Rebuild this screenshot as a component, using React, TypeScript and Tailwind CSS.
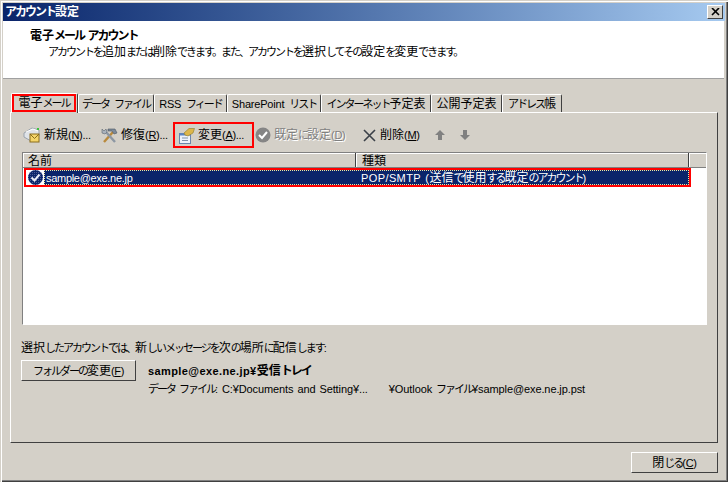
import type { ReactNode } from 'react';

const tabs = [
  { label: 'データ ファイル', w: 'w-[76px]' },
  { label: 'RSS フィード', w: 'w-[73px]' },
  { label: 'SharePoint リスト', w: 'w-[94px]' },
  { label: 'インターネット予定表', w: 'w-[110px]' },
  { label: '公開予定表', w: 'w-[71px]' },
  { label: 'アドレス帳', w: 'w-[60px]' },
];

// raised win2k style edge
const raised = 'border border-t-white border-l-white border-r-[#404040] border-b-[#404040]';

// the reference font is proportional: kana is narrower than kanji, so split text into runs
function T({ children, bold, latin }: { children: string; bold?: boolean; latin?: string }) {
  const runs = children.match(/[\u3000-\u30ff]+|[\u4e00-\u9fff]+|[^\u3000-\u30ff\u4e00-\u9fff]+/g) ?? [];
  return (
    <>
      {runs.map((run, i) => {
        if (/^[\u3000-\u30ff]/.test(run)) {
          return (
            <span key={i} className={bold ? 'text-[12px] tracking-[-2px]' : 'text-[11px] tracking-[-2px]'}>
              {run}
            </span>
          );
        }
        if (/^[\u4e00-\u9fff]/.test(run)) {
          return <span key={i} className="text-[12px]">{run}</span>;
        }
        return (
          <span key={i} className={`text-[11px] ${latin ?? (bold ? 'tracking-[0.4px]' : 'tracking-[-0.3px]')}`}>
            {run}
          </span>
        );
      })}
    </>
  );
}

// label with its underlined access key, e.g. 新規(N)...
function Acc({ text, k, tail = '' }: { text: string; k: string; tail?: string }) {
  return (
    <span>
      <T>{text + '('}</T>
      <u><T>{k}</T></u>
      <T>{')' + tail}</T>
    </span>
  );
}

function MailIcon() {
  return (
    <svg width="18" height="18" viewBox="0 0 18 18" className="shrink-0">
      <path d="M1 7 L9 2 L16 4 L16 10 L8 15 L1 11 Z" fill="#dfe3e8" stroke="#9aa3ad" />
      <path d="M3 6 L10 3 L15 5" fill="none" stroke="#fff" />
      <rect x="7" y="8" width="9" height="8" fill="#f4d56a" stroke="#8a6d1c" />
      <path d="M7 8 L11.5 12.5 L16 8" fill="none" stroke="#8a6d1c" />
      <rect x="14" y="2" width="2" height="2" fill="#3fc23f" />
    </svg>
  );
}

function ToolsIcon() {
  return (
    <svg width="17" height="17" viewBox="0 0 17 17" className="shrink-0">
      <path d="M3 15 L12 5" stroke="#b98a3c" strokeWidth="2.4" />
      <path d="M7 2 L14 2 L16 6 L13 7 L11 4 L7 4 Z" fill="#7d8a99" stroke="#4c5663" strokeWidth="0.6" />
      <path d="M14 15 L5 5" stroke="#8d97a3" strokeWidth="2.4" />
      <path d="M1 2 L3 4 L5 2 L6 5 L4 7 L1 6 Z" fill="#aab3bd" stroke="#5a6470" strokeWidth="0.6" />
    </svg>
  );
}

function ChangeIcon() {
  return (
    <svg width="17" height="17" viewBox="0 0 17 17" className="shrink-0">
      <rect x="1.5" y="6.5" width="11" height="10" fill="#eef3fa" stroke="#6a86ad" />
      <rect x="1.5" y="6.5" width="11" height="2" fill="#5b84c4" />
      <path d="M4 11 H10 M4 13.5 H10" stroke="#7f93ad" />
      <path d="M6 6 L11 1.5 L16.5 1.5 L15 6 L10 9 L7 8 Z" fill="#dcb64a" stroke="#8b7a2c" strokeWidth="0.6" />
    </svg>
  );
}

function CheckCircle() {
  return (
    <svg width="16" height="16" viewBox="0 0 16 16" className="shrink-0">
      <circle cx="8" cy="8" r="7.5" fill="#858585" />
      <path d="M4 8 L7 11 L12 5" fill="none" stroke="#fff" strokeWidth="2" />
    </svg>
  );
}

function CloseX() {
  return (
    <svg width="15" height="15" viewBox="0 0 15 15" className="shrink-0">
      <path d="M2 2 L13 13 M13 2 L2 13" stroke="#3a4048" strokeWidth="1.6" />
    </svg>
  );
}

function Arrow({ down }: { down?: boolean }) {
  return (
    <svg width="12" height="12" viewBox="0 0 12 12" className="shrink-0">
      <path
        d={down ? 'M4 1 H8 V6 H11 L6 11 L1 6 H4 Z' : 'M6 1 L11 6 H8 V11 H4 V6 H1 Z'}
        fill="#808080"
      />
    </svg>
  );
}

function ToolItem({ icon, children, className }: { icon: ReactNode; children: ReactNode; className?: string }) {
  return (
    <div className={`flex items-center gap-[3px] ${className ?? ''}`}>
      {icon}
      <span className="whitespace-nowrap">{children}</span>
    </div>
  );
}

export default function App() {
  return (
    <div
      className="w-[728px] h-[482px] overflow-hidden bg-[#d4d0c8] p-[3px] flex flex-col text-[12px] leading-[14px] text-black shadow-[inset_1px_1px_0_#d4d0c8,inset_2px_2px_0_#fff,inset_-1px_-1px_0_#404040,inset_-2px_-2px_0_#808080]"
      style={{ fontFamily: '"Liberation Sans", "Noto Sans CJK JP", sans-serif' }}
    >
      {/* title bar */}
      <div className="h-[18px] flex items-center justify-between pl-[2px] pr-[2px] bg-gradient-to-r from-[#0a246a] to-[#a6caf0]">
        <span className="text-white font-bold"><T bold>アカウント設定</T></span>
        <div className={`w-[16px] h-[14px] bg-[#d4d0c8] flex items-center justify-center ${raised}`}>
          <svg width="9" height="8" viewBox="0 0 9 8">
            <path d="M1 0 L8 7 M8 0 L1 7" stroke="#000" strokeWidth="1.6" />
          </svg>
        </div>
      </div>

      {/* header */}
      <div className="h-[58px] bg-white border-b border-b-[#a0a0a0] mr-[1px] pl-[27px] pt-[8px]">
        <div className="font-bold"><T bold>電子メール アカウント</T></div>
        <div className="pl-[18px] pt-[2px] whitespace-nowrap">
          <T>アカウントを追加または削除できます。また、アカウントを選択してその設定を変更できます。</T>
        </div>
      </div>

      {/* tabs */}
      <div className="mt-[14px] ml-[8px] flex items-start h-[19px] relative z-10">
        <div className="w-[67px] h-[20px] pt-[1px] pb-[1px] border-t border-l border-white bg-[#d4d0c8] border-r border-r-[#404040] rounded-t-[2px] flex items-end">
          <span className="w-[64px] h-[18px] border-2 border-[#ff0000] flex items-center justify-center whitespace-nowrap">
            <T>電子メール</T>
          </span>
        </div>
        {tabs.map((t) => (
          <div
            key={t.label}
            className={`${t.w} h-[18px] mt-[1px] border-t border-l border-white border-r border-r-[#404040] rounded-t-[2px] flex items-center justify-center whitespace-nowrap`}
          >
            <span><T latin="tracking-[-0.2px] [word-spacing:2px]">{t.label}</T></span>
          </div>
        ))}
      </div>

      {/* tab panel */}
      <div className="ml-[7px] mr-[7px] h-[331px] border border-t-white border-l-white border-r-[#404040] border-b-[#404040] pl-[11px] pr-[10px] pt-[9px]">
        <div className="h-[26px] flex items-center">
          <ToolItem icon={<MailIcon />} className="ml-[1px] w-[78px]"><Acc text="新規" k="N" tail="..." /></ToolItem>
          <ToolItem icon={<ToolsIcon />} className="w-[72px]"><Acc text="修復" k="R" tail="..." /></ToolItem>
          <div className="w-[81px] h-[26px] border-2 border-[#ff0000] pl-[3px] flex items-center">
            <ToolItem icon={<ChangeIcon />}><Acc text="変更" k="A" tail="..." /></ToolItem>
          </div>
          <ToolItem icon={<CheckCircle />} className="ml-[1px] w-[107px] text-[#808080] [text-shadow:1px_1px_0_#fff]"><Acc text="既定に設定" k="D" /></ToolItem>
          <ToolItem icon={<CloseX />} className="w-[72px]"><Acc text="削除" k="M" /></ToolItem>
          <Arrow />
          <div className="ml-[13px]"><Arrow down /></div>
        </div>

        {/* account list */}
        <div className="mt-[4px] h-[173px] bg-white border border-t-[#808080] border-l-[#808080] border-r-white border-b-white w-[685px]">
          <div className="h-[15px] flex bg-[#d4d0c8] border-b border-b-[#808080]">
            <div className="w-[333px] h-full pl-[5px] pt-[1px] border-r border-r-[#404040] shadow-[inset_1px_1px_0_#fff]"><T>名前</T></div>
            <div className="w-[333px] h-full pl-[6px] pt-[1px] border-r border-r-[#404040] shadow-[inset_1px_1px_0_#fff]"><T>種類</T></div>
            <div className="flex-1 h-full shadow-[inset_1px_1px_0_#fff]" />
          </div>
          <div className="ml-[1px] w-[667px] h-[19px] border-2 border-[#ff0000] flex items-center bg-[#0a246a] text-white">
            <div className="w-[18px] h-full bg-white flex items-center justify-center shrink-0">
              <svg width="15" height="15" viewBox="0 0 15 15">
                <defs>
                  <pattern id="dither" width="2" height="2" patternUnits="userSpaceOnUse">
                    <rect width="2" height="2" fill="#0a246a" />
                    <rect width="1" height="1" fill="#4a5c94" />
                  </pattern>
                </defs>
                <circle cx="7.5" cy="7.5" r="7.5" fill="url(#dither)" />
                <path d="M3.5 7.5 L6.5 10.5 L11.5 4.5" fill="none" stroke="#e8ecf6" strokeWidth="2" />
              </svg>
            </div>
            <div className="flex-1 h-full flex items-center border border-dotted border-[#f0e8a0]">
              <div className="w-[316px] pl-[1px] whitespace-nowrap"><T>sample@exe.ne.jp</T></div>
              <div className="whitespace-nowrap"><T latin="tracking-[0.4px] [word-spacing:1px]">POP/SMTP (送信で使用する既定のアカウント)</T></div>
            </div>
          </div>
        </div>

        {/* delivery */}
        <div className="mt-[16px] -ml-[1px] whitespace-nowrap">
          <T>選択したアカウントでは、新しいメッセージを次の場所に配信します:</T>
        </div>
        <div className="mt-[5px] -ml-[1px] flex">
          <div className={`w-[115px] h-[21px] flex items-center justify-center whitespace-nowrap ${raised}`}>
            <Acc text="フォルダーの変更" k="F" />
          </div>
          <div className="ml-[12px] pt-[4px]">
            <div className="font-bold whitespace-nowrap"><T bold>sample@exe.ne.jp¥受信トレイ</T></div>
            <div className="mt-[4px] whitespace-nowrap">
              <T latin="tracking-[-0.1px] [word-spacing:1px]">データ ファイル: C:¥Documents and Setting¥...</T>
              <span className="ml-[21px]"><T latin="tracking-[-0.1px] [word-spacing:1px]">¥Outlook ファイル¥sample@exe.ne.jp.pst</T></span>
            </div>
          </div>
        </div>
      </div>

      {/* footer */}
      <div className="flex justify-end mt-[9px] pr-[7px]">
        <div className={`w-[87px] h-[21px] flex items-center justify-center whitespace-nowrap ${raised}`}>
          <Acc text="閉じる" k="C" />
        </div>
      </div>
    </div>
  );
}
